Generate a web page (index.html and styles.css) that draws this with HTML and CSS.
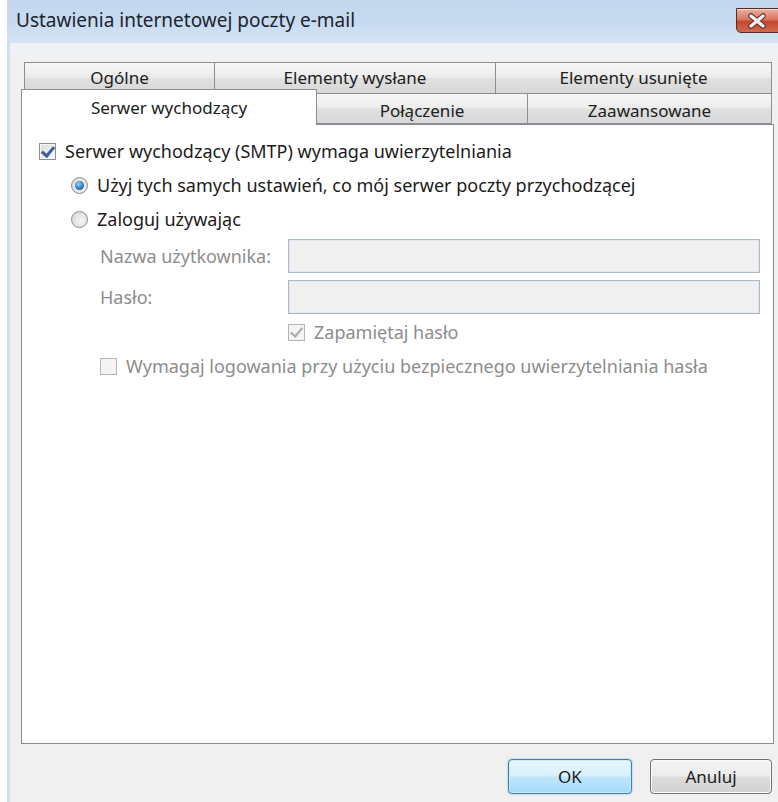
FILE: index.html
```html
<!DOCTYPE html>
<html lang="pl">
<head>
<meta charset="utf-8">
<title>Ustawienia internetowej poczty e-mail</title>
<link rel="stylesheet" href="styles.css">
</head>
<body>
<div class="window">
  <header class="titlebar">
    <span class="title">Ustawienia internetowej poczty e-mail</span>
    <div class="close" aria-label="Zamknij">
      <svg width="22" height="16" viewBox="0 0 22 16" aria-hidden="true">
        <path d="M5 3 L17 13 M17 3 L5 13" stroke="#5a2a22" stroke-width="5.5" stroke-linecap="round"/>
        <path d="M5 3 L17 13 M17 3 L5 13" stroke="#f2f2f2" stroke-width="3.4" stroke-linecap="round"/>
      </svg>
    </div>
  </header>

  <div class="client">
    <div class="tabs">
      <div class="tab-row row-back">
        <div class="tab t-general">Ogólne</div>
        <div class="tab t-sent">Elementy wysłane</div>
        <div class="tab t-deleted">Elementy usunięte</div>
      </div>
      <div class="tab-row row-front">
        <div class="tab active t-outgoing">Serwer wychodzący</div>
        <div class="tab t-connection">Połączenie</div>
        <div class="tab t-advanced">Zaawansowane</div>
      </div>
    </div>

    <div class="panel">
      <label class="opt">
        <span class="check checked"></span>Serwer wychodzący (SMTP) wymaga uwierzytelniania
      </label>
      <div class="auth-choice">
        <label class="opt"><span class="radio on"></span>Użyj tych samych ustawień, co mój serwer poczty przychodzącej</label>
        <label class="opt"><span class="radio"></span>Zaloguj używając</label>
        <div class="creds">
          <div class="field-row"><span class="lbl">Nazwa użytkownika:</span><span class="input"></span></div>
          <div class="field-row"><span class="lbl">Hasło:</span><span class="input"></span></div>
          <label class="opt disabled remember"><span class="check checked dis"></span>Zapamiętaj hasło</label>
          <label class="opt disabled"><span class="check dis"></span>Wymagaj logowania przy użyciu bezpiecznego uwierzytelniania hasła</label>
        </div>
      </div>
    </div>

    <div class="buttons">
      <button class="btn default">OK</button>
      <button class="btn">Anuluj</button>
    </div>
  </div>
</div>
</body>
</html>
```

FILE: styles.css
```css
* { box-sizing: border-box; }

html, body {
  margin: 0;
  padding: 0;
}

body {
  width: 778px;
  height: 802px;
  overflow: hidden;
  background: #ffffff;
  font-family: "Noto Sans", "Open Sans", sans-serif;
  font-size: 18px;
  color: #1c1c1c;
}

/* window frame */
.window {
  margin-left: 7px;
  width: 800px;
  height: 802px;
  display: flex;
  flex-direction: column;
  background: #cddff2;
}

.titlebar {
  position: relative;
  height: 43px;
  flex: none;
  display: flex;
  align-items: center;
  padding: 0 0 3px 9px;
  background: linear-gradient(#c2d7ee, #c8dbf0 55%, #d5e4f4);
}

.title {
  font-size: 19px;
  color: #1b2430;
}

.close {
  position: absolute;
  left: 729px;
  top: 8px;
  width: 60px;
  height: 25px;
  border: 1px solid #5b2a22;
  border-radius: 0 0 0 5px;
  background: linear-gradient(#eab2a3, #d9765f 45%, #c4472f 55%, #d06a4e);
  box-shadow: inset 0 1px 0 rgba(255,255,255,0.5);
  display: flex;
  align-items: center;
  padding-left: 9px;
}

/* dialog client area */
.client {
  flex: 1;
  margin-left: 3px;
  padding: 19px 0 0 11px;
  background: linear-gradient(#eef3f9, #f0f0f0 18px);
}

/* tab strip: two stacked rows */
.tabs {
  width: 753px;
  position: relative;
  z-index: 1;
}

.tab-row {
  display: flex;
}

.row-back {
  margin-left: 3px;
  height: 32px;
}

.row-front {
  height: 31px;
  margin-top: -1px;
  align-items: flex-end;
}

.tab {
  height: 100%;
  margin-right: -1px;
  border: 1px solid #8c8e94;
  background: linear-gradient(#f6f6f6, #ececec 48%, #e0e0e0 52%, #d8d8d8);
  display: flex;
  align-items: center;
  justify-content: center;
  font-size: 17px;
  color: #202020;
  padding-bottom: 1px;
}

.row-front .tab {
  padding: 3px 0 0;
}

.t-general { width: 191px; }
.t-sent { width: 282px; }
.t-deleted { width: 277px; }

.t-outgoing { width: 296px; }
.t-connection { width: 212px; }
.t-advanced { width: 245px; }

.row-front .tab.active {
  height: 36px;
  margin-bottom: -1px;
  border-bottom: none;
  background: #ffffff;
  padding: 0 0 1px;
}

/* page of the selected tab */
.panel {
  width: 753px;
  height: 620px;
  border: 1px solid #898c95;
  background: #ffffff;
  padding: 9px 0 0 17px;
}

.opt {
  display: flex;
  align-items: center;
  height: 34px;
  white-space: nowrap;
}

.disabled {
  color: #8d8d8d;
}

.check {
  width: 17px;
  height: 17px;
  margin-right: 9px;
  flex: none;
  border: 1px solid #8e8f8f;
  background: linear-gradient(135deg, #dcdcdc, #f8f8f8);
  box-shadow: inset 0 0 0 1px #f4f4f4;
  position: relative;
}

.check.checked::after {
  content: "";
  position: absolute;
  left: 4px;
  top: 0px;
  width: 5px;
  height: 10px;
  border: solid #3a5f9a;
  border-width: 0 3px 3px 0;
  transform: rotate(40deg);
}

.check.dis {
  border-color: #b4b4b4;
  background: #f4f4f4;
}

.check.checked.dis::after {
  border-color: #a8a8a8;
  border-width: 0 2px 2px 0;
}

.radio {
  width: 17px;
  height: 17px;
  margin-right: 9px;
  flex: none;
  border-radius: 50%;
  border: 1px solid #8b8b8b;
  background: radial-gradient(circle at 60% 60%, #f6f6f6, #d2d2d2);
  position: relative;
}

.radio.on::after {
  content: "";
  position: absolute;
  left: 3px;
  top: 3px;
  width: 9px;
  height: 9px;
  border-radius: 50%;
  background: radial-gradient(circle at 40% 35%, #9fd8f7, #2a78c2 55%, #1c4f8e);
}

.auth-choice {
  margin-left: 32px;
}

.creds {
  margin-left: 29px;
  padding-top: 3px;
}

.field-row {
  display: flex;
  align-items: center;
  height: 34px;
  margin-bottom: 7px;
  color: #8d8d8d;
}

.lbl {
  width: 188px;
  flex: none;
}

.input {
  width: 472px;
  height: 34px;
  border: 1px solid #abb8c9;
  background: #f0f0f0;
  box-shadow: inset 0 0 0 1px #e4e8ee;
}

.remember {
  margin-left: 188px;
  margin-top: -6px;
}

/* dialog buttons */
.buttons {
  width: 753px;
  display: flex;
  justify-content: flex-end;
  gap: 18px;
  padding: 15px 2px 0 0;
}

.btn {
  width: 122px;
  height: 35px;
  font-family: inherit;
  font-size: 17px;
  color: #1c1c1c;
  border: 1px solid #707070;
  border-radius: 4px;
  background: linear-gradient(#f4f4f4, #ececec 48%, #dcdcdc 52%, #d2d2d2);
  box-shadow: inset 0 0 0 1px #fbfbfb;
  padding: 0;
}

.btn.default {
  width: 124px;
  border-color: #3c7fb1;
  background: linear-gradient(#eaf6fd, #d9f0fc 48%, #bee6fd 52%, #a7d9f5);
  box-shadow: inset 0 0 0 1px #cbeaf9, 0 0 2px #6fb6e3;
}
```
